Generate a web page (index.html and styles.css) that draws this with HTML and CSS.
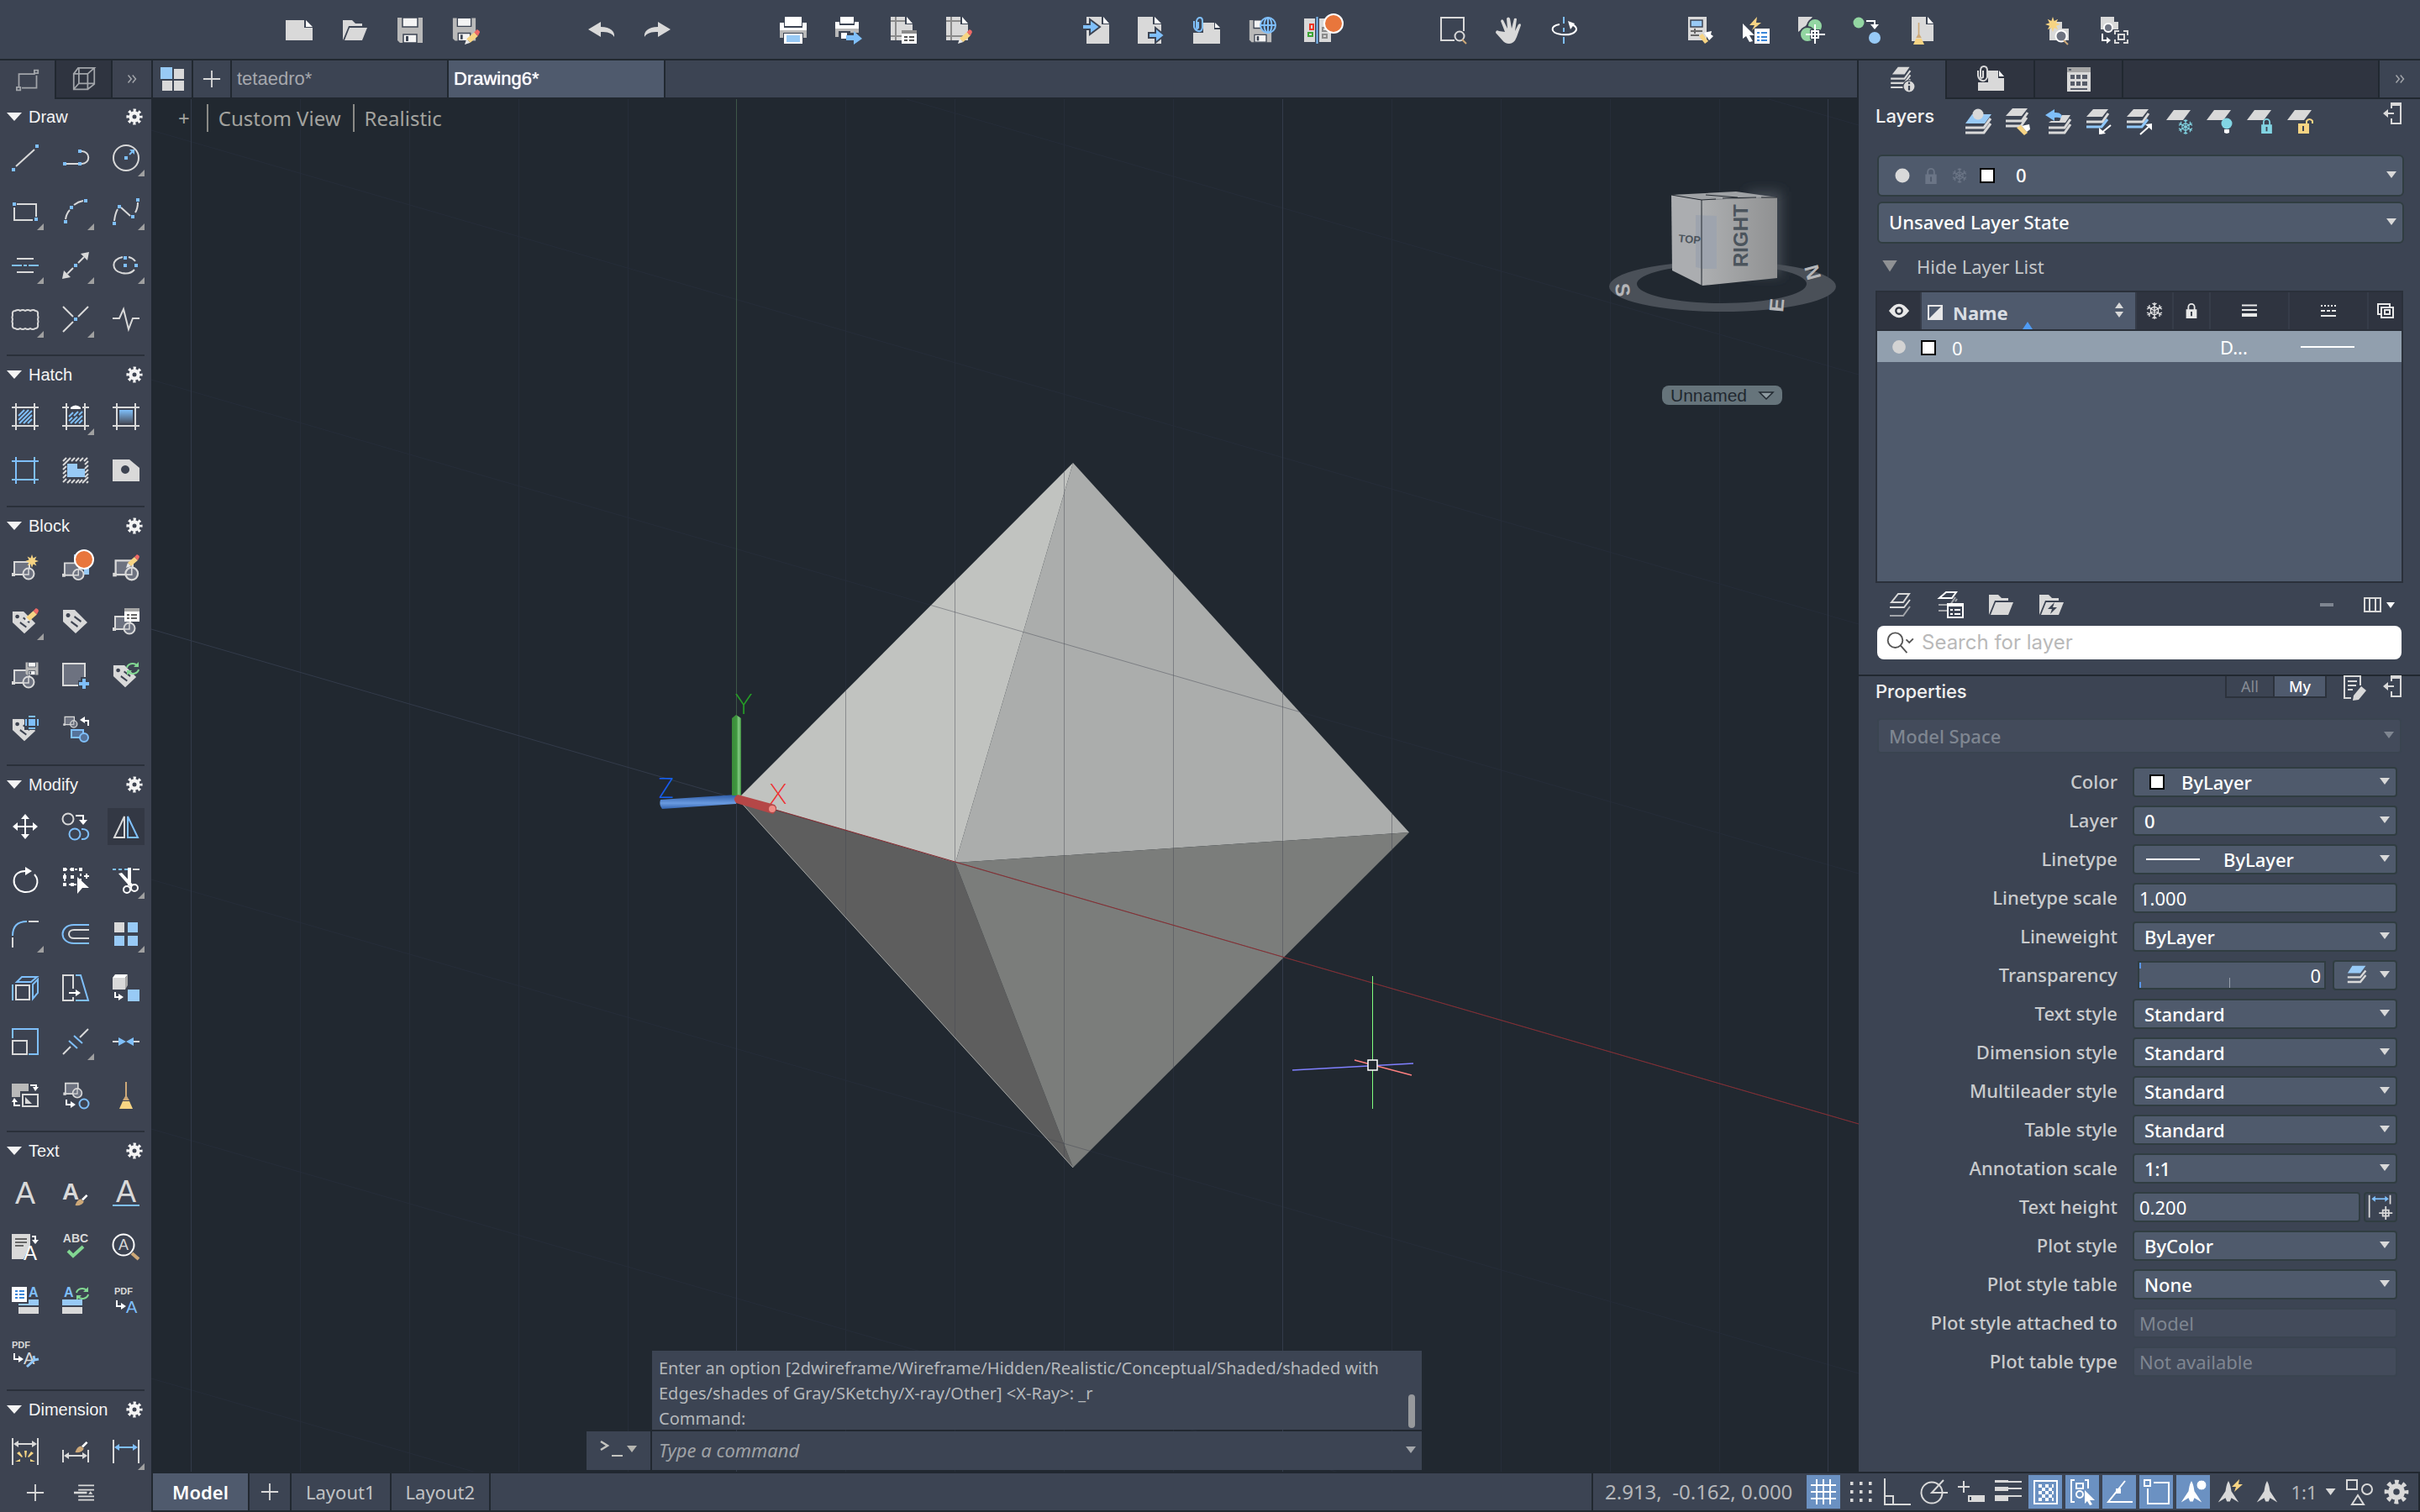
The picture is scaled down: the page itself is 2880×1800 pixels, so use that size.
FILE: index.html
```
<!DOCTYPE html>
<html lang="en">
<head>
  <meta charset="UTF-8">
  <title>Drawing6</title>
  <link rel="stylesheet" href="styles.css">
</head>
<body>

<!-- Shared icon parts -->
<svg class="sprite" aria-hidden="true">
  <symbol id="gear" viewBox="0 0 24 24"><circle cx="12" cy="12" r="9" fill="none" stroke="currentColor" stroke-width="5" stroke-dasharray="3.6 3.468" stroke-dashoffset="1.8"/><circle cx="12" cy="12" r="5.5" fill="none" stroke="currentColor" stroke-width="5"/></symbol>
  <symbol id="snow" viewBox="0 0 20 20"><path d="M10 0v20M1.500 5l17 10M1.500 15l17-10M10 5l4.500 2.500v5L10 15l-4.500-2.500v-5zM7.500 1L10 3l2.500-2M7.500 19l2.500-2 2.500 2M1 8l3-1.500V3M19 12l-3 1.500V17M1 12l3 1.500V17M19 8l-3-1.500V3" fill="none" stroke="currentColor" stroke-width="1.300"/></symbol>
  <symbol id="lock" viewBox="0 0 16 22"><path d="M4 10V6a4 4 0 0 1 8 0v4" fill="none" stroke="currentColor" stroke-width="2"/><path d="M1 9h14v12H1zM7 12v6h2v-6z" fill="currentColor" fill-rule="evenodd"/></symbol>
  <symbol id="pencil" viewBox="0 0 16 16"><path d="M0 16l2-6 4 4z" fill="#e8e8e8"/><path d="M2 10l8-7 4 4-8 7z" fill="#f7d483"/><path d="M10 3l3-3q3 1 3 3l-2 4z" fill="#ee6a66"/></symbol>
  <symbol id="sun" viewBox="0 0 16 16"><path d="M8 0l1.500 4.500 4-2-2 4L16 8l-4.500 1.500 2 4-4-2L8 16l-1.500-4.500-4 2 2-4L0 8l4.500-1.500-2-4 4 2z" fill="#f7d483"/></symbol>
  <symbol id="blk" viewBox="0 0 28 24"><path d="M3 2h18v15H3z" fill="#6d7280" stroke="#d9d9d9" stroke-width="2"/><path d="M0 15h4v4H0z" fill="#d9d9d9"/><circle cx="20" cy="16" r="6.500" fill="#6d7280" stroke="#d9d9d9" stroke-width="2"/><path d="M20 10v7h-6" fill="none" stroke="#d9d9d9" stroke-width="1.500"/></symbol>
  <symbol id="tag" viewBox="0 0 32 32"><path d="M1 2h14l15 15-14 13L1 16zM7 6a2.500 2.500 0 1 0 .1 0zM15 9l-1 2 8 6 1-2zM11 15l-1 2 8 6 1-2z" fill="#d9d9d9" fill-rule="evenodd"/></symbol>
  <symbol id="sync" viewBox="0 0 16 16"><path d="M1 7a7 6 0 0 1 12-3M15 9a7 6 0 0 1-12 3" fill="none" stroke="#82d792" stroke-width="2"/><path d="M15 0v6H9zM1 16v-6h6z" fill="#82d792"/></symbol>
  <symbol id="floppy" viewBox="0 0 32 32"><path d="M1 1h30v30H4l-3-3z" fill="#b9b9b9"/><path d="M7 1h18v11H7zM8 21h16v10H8z" fill="#f4f4f4" stroke="#3c4453" stroke-width="1.500"/><path d="M11 23h3v6h-3z" fill="#3c4453"/></symbol>
  <symbol id="page" viewBox="0 0 32 32"><path d="M5 0h18v9h9v23H5z" fill="#d9d9d9"/><path d="M25 0l7 8h-7z" fill="#fff"/></symbol>
  <symbol id="layers" viewBox="0 0 32 32"><path d="M12 1h16l-7 10H4z" fill="#d9d9d9"/><path d="M2 17h19l8-11M2 23h19l8-11M2 29h19l8-11" fill="none" stroke="#d9d9d9" stroke-width="2.500"/></symbol>
  <symbol id="brush" viewBox="0 0 16 16"><path d="M8 7l6-6 2 2-6 6z" fill="#fff"/><path d="M0 15q2-7 7-8l4 3q-3 6-11 5z" fill="#cda878"/></symbol>
  <symbol id="dock" viewBox="0 0 24 28"><path d="M10 8V2h11v24H10v-6M4 14h9" fill="none" stroke="currentColor" stroke-width="2"/><path d="M0 14l6-5v10zM10 1h12v4H10z" fill="currentColor"/></symbol>
  <symbol id="folder" viewBox="0 0 32 32"><path d="M2 4h11l4 4h8v3H9L2 28z" fill="#d9d9d9"/><path d="M10 13h21l-6 15H4z" fill="#d9d9d9"/></symbol>
  <symbol id="person" viewBox="0 0 32 32"><path d="M16 0c3 5 3 9 4 14l10 15-10-6-2 5h-4l-2-5-10 6 10-15c1-5 1-9 4-14z" fill="currentColor"/></symbol>
  <symbol id="broom" viewBox="0 0 16 32"><path d="M7 0h2v17l3 5H4l3-5z" fill="#cda878"/><path d="M4 23h8l4 9H0z" fill="#f7d483"/></symbol>
</svg>

<!-- Main toolbar -->
<header class="toolbar">
  <div class="group">
    <button aria-label="New"><svg viewBox="0 0 32 32"><path class="f" d="M0 4h22v9h10v15H0z"/><path class="fw" d="M24 4l8 8h-8z"/></svg></button>
    <button aria-label="Open"><svg viewBox="0 0 32 32"><use href="#folder"/></svg></button>
    <button aria-label="Save"><svg viewBox="0 0 32 32"><use href="#floppy"/></svg></button>
    <button aria-label="Save As"><svg viewBox="0 0 32 32"><use href="#floppy" width="29" height="30"/><use href="#pencil" x="15" y="15" width="18" height="18"/></svg></button>
  </div>
  <div class="group">
    <button aria-label="Undo"><svg viewBox="0 0 32 32"><path class="f" d="M0 15L15 6v6c12 0 17 6 16 12-3-5-8-6-16-6v6z"/></svg></button>
    <button aria-label="Redo"><svg viewBox="0 0 32 32"><path class="f" d="M32 15L17 6v6C5 12 0 18 1 24c3-5 8-6 16-6v6z"/></svg></button>
  </div>
  <div class="group">
    <button aria-label="Plot"><svg viewBox="0 0 32 32"><path class="fw" d="M6 0h20v11H6zM0 7h5v6h22V7h5v9H0z"/><path d="M0 16h32v9h-4v-6H4v6H0z" fill="#b9b9b9"/><path class="fw" d="M5 20h22v12H5z"/><path class="fb" d="M8 22h16v8H8z"/></svg></button>
    <button aria-label="Batch Plot"><svg viewBox="0 0 32 32"><path class="fw" d="M6 0h16v8H6zM0 6h5v4h18V6h5v8H0z"/><path d="M0 14h28v5H18v-2H4v7H0z" fill="#b9b9b9"/><path class="fw" d="M7 19h7v7H7z"/><path class="fbd" d="M13 22h9v-5l10 9-10 7v-5h-9z"/></svg></button>
    <button aria-label="Page Setup"><svg viewBox="0 0 32 32"><path class="f" d="M0 0h17v9h9v19H0z"/><path class="fw" d="M19 0l7 8h-7z"/><path class="sg" d="M6 0v28M0 5h17M0 23h20"/><path class="fw" d="M13 16h18v16H13z"/><path d="M13 16h18v4H13z" fill="#8b8b8b"/><path d="M16 23h4v2h-4zM22 23h6v2h-6zM16 27h4v2h-4zM22 27h6v2h-6z" fill="#555"/></svg></button>
    <button aria-label="Edit Page"><svg viewBox="0 0 32 32"><path class="f" d="M0 0h17v9h9v19H0z"/><path class="fw" d="M19 0l7 8h-7z"/><path class="sg" d="M6 0v28M0 5h17M0 23h20"/><use href="#pencil" x="14" y="15" width="17" height="17"/></svg></button>
  </div>
  <div class="group">
    <button aria-label="Import"><svg viewBox="0 0 32 32"><use href="#page"/><path class="fbd edge" d="M0 9h9V3l12 9-12 9v-6H0z"/></svg></button>
    <button aria-label="Export"><svg viewBox="0 0 32 32"><path class="f" d="M0 0h18v9h10v23H0z"/><path class="fw" d="M20 0l8 8h-8z"/><path class="fbd edge" d="M13 19h8v-6l11 9-11 9v-6h-8z"/></svg></button>
    <button aria-label="Attach"><svg viewBox="0 0 32 32"><path class="f" d="M0 19h12V7h13v8h7v17H0z"/><path class="fw" d="M26 7l6 6h-6z"/><path d="M0 0h12v19H0z" fill="#3c4453"/><path class="sb" d="M6 6v7q-2 3-2-1V5q1-4 4-4t3 4v8q-1 5-5 4t-5-5V5"/></svg></button>
    <button aria-label="Save to Web"><svg viewBox="0 0 32 32"><use href="#floppy" y="2" width="28" height="30"/><circle cx="23" cy="10" r="9" fill="#3c4453" stroke="#7fbffa" stroke-width="2"/><path class="sb" d="M14 10h18M23 1v18"/><ellipse class="sb" cx="23" cy="10" rx="4.500" ry="9"/></svg></button>
    <button class="badged" aria-label="Drawing Compare"><svg viewBox="0 0 32 32"><path class="f" d="M0 2h13v28H0zM18 2h14v28H18z"/><path class="sb" d="M15.500 0v32"/><path d="M7 9h4v6H7z" fill="none" stroke="#ee3524" stroke-width="2"/><path d="M5 19h5v4H5z" fill="none" stroke="#3ca535" stroke-width="2"/><path class="sg" d="M22 13h5v4h-5zM22 21h5v4h-5z"/></svg></button>
  </div>
  <div class="group">
    <button aria-label="Zoom Window"><svg viewBox="0 0 32 32"><path class="s" d="M28 17V1H1v27h16"/><circle class="s" cx="23" cy="23" r="5.500"/><path d="M26 27l5 5" stroke="#cda878" stroke-width="2"/></svg></button>
    <button aria-label="Pan"><svg viewBox="0 0 32 32"><path class="f" d="M11 18L6 5q1-3 3-1l5 10-1-12q2-3 4 0l2 12 3-12q3-1 3 1l-2 14 4-8q3-2 3 1l-5 14q-3 8-9 8-5 0-8-4l-8-9q0-4 4-2z"/></svg></button>
    <button aria-label="Orbit"><svg viewBox="0 0 32 32"><path class="sb" d="M15 0v8M15 13v5M15 24v8"/><path class="sw" d="M10 9C-1 11-2 19 12 21c17 2 24-8 12-12"/><path class="fw" d="M20 5l8 3-5 7z"/></svg></button>
  </div>
  <div class="group">
    <button aria-label="Match Properties"><svg viewBox="0 0 32 32"><path class="f" d="M1 0h22v28H1z"/><path class="fb" d="M4 4h14v8H4z" stroke="#3c4453" stroke-width="1.500"/><path class="sk" d="M4 17h14M4 22h10M9 14v6"/><path class="fy" d="M14 23l4-3 7 9-4 3z"/><path class="fw" d="M20 19l4-1 5-1-1 4 3 2-5 5z"/></svg></button>
    <button aria-label="Quick Select"><svg viewBox="0 0 32 32"><path class="fw" d="M0 8l14 14H8l4 7-4 1-4-7-4 3z"/><path class="fy" d="M17 0l-9 10h6l-3 6 11-9h-6z"/><path class="fw" d="M14 14h18v18H14z"/><path class="sbk" d="M17 19h3M22 19h7M17 24h3M22 24h7M17 28h3M22 28h7"/></svg></button>
    <button aria-label="Isolate"><svg viewBox="0 0 32 32"><path class="f" d="M0 0h17L8 12 0 18z"/><circle class="fg edge" cx="20" cy="11" r="9"/><circle class="fg edge" cx="11" cy="21" r="9"/><path d="M14 15h12v12H14z" fill="#3c4453"/><path class="sw" d="M20 9v23M9 21h23M16 17h8v8h-8z"/></svg></button>
    <button aria-label="Object Copy"><svg viewBox="0 0 32 32"><circle class="fg" cx="6" cy="7" r="6.500"/><circle class="fb" cx="25" cy="25" r="7"/><path class="sw" d="M15 5h10v5"/><path class="fw" d="M20 9h10l-5 6z"/></svg></button>
    <button aria-label="Purge"><svg viewBox="0 0 32 32"><path class="f" d="M3 0h17v9h9v20H3z"/><path class="fw" d="M22 0l7 8h-7z"/><use href="#broom" x="5" y="7" width="13" height="26"/></svg></button>
  </div>
  <div class="group">
    <button aria-label="View New"><svg viewBox="0 0 32 32"><path class="f" d="M5 15l6-9h9v8h8v14H5z"/><use href="#sun" width="18" height="18"/><circle cx="19" cy="23" r="6.500" fill="#6d7280" stroke="#fff" stroke-width="2"/><path d="M22 28l5 5" stroke="#cda878" stroke-width="2"/></svg></button>
    <button aria-label="View Manager"><svg viewBox="0 0 32 32"><path class="f" d="M0 0h16v6h5v9H0z"/><circle cx="9" cy="13" r="5" fill="#6d7280" stroke="#fff" stroke-width="2"/><path class="sw" d="M2 20v8h6"/><path class="fw" d="M7 24l5 4-5 4z"/><path class="s" d="M17 21v-4h5M27 17h5v5M32 27v4h-5M22 31h-5v-4M21 21h7v6h-7z"/></svg></button>
  </div>
</header>

<div class="workspace">

  <!-- Tool palette -->
  <aside class="palette">
    <div class="palette-tabs">
      <button class="active" aria-label="Drafting"><svg viewBox="0 0 32 32"><path class="sgr" d="M4 26V8h22M28 10v17H8M1 26h5v4H1zM25 3h5v4h-5z"/></svg></button>
      <button aria-label="Modeling"><svg viewBox="0 0 32 32"><path class="sgr" d="M2 9h19v21H2zM2 9l6-8h22l-9 8M30 1v22l-9 7M9 2v20l-7 8M9 22h20"/></svg></button>
      <button aria-label="More palettes" class="more"><svg viewBox="0 0 16 16"><path class="sgr" d="M2 2l5 6-5 6M9 2l5 6-5 6"/></svg></button>
    </div>
    <div class="palette-body">
      <section>
        <h2>Draw <button aria-label="Draw settings"><svg viewBox="0 0 24 24"><use href="#gear"/></svg></button></h2>
        <div class="tools">
          <button aria-label="Line"><svg viewBox="0 0 32 32"><path class="s" d="M5 26L27 6"/><path class="fbd" d="M0 28h4v4H0zM28 0h4v4h-4z"/></svg></button>
          <button aria-label="Polyline"><svg viewBox="0 0 32 32"><path class="s" d="M5 23h14M23 23c11 0 11-15 0-15"/><path class="fbd" d="M1 21h4v4H1zM19 21h4v4h-4zM19 6h4v4h-4z"/></svg></button>
          <button class="fly" aria-label="Circle"><svg viewBox="0 0 32 32"><circle class="s" cx="16" cy="16" r="15"/><path class="sb" d="M20 12l4-4"/><path class="fbd" d="M14 14h4v4h-4zM26 6v6l-6-6z"/></svg></button>
          <button class="fly" aria-label="Rectangle"><svg viewBox="0 0 32 32"><path class="s" d="M6 7h23v15M3 11v15h22"/><path class="fbd" d="M1 5h4v4H1zM27 23h4v4h-4z"/></svg></button>
          <button class="fly" aria-label="Arc"><svg viewBox="0 0 32 32"><path class="s" d="M4 25q1-7 5-11M14 8q5-4 11-5"/><path class="fbd" d="M2 26h4v4H2zM9 9h4v4H9zM26 1h4v4h-4z"/></svg></button>
          <button class="fly" aria-label="Spline"><svg viewBox="0 0 32 32"><path class="s" d="M2 27q1-9 4-14M10 11l11 10M27 17q3-5 3-12"/><path class="fbd" d="M0 28h4v4H0zM6 8h4v4H6zM22 20h4v4h-4zM28 0h4v4h-4z"/></svg></button>
          <button class="fly" aria-label="Centerline"><svg viewBox="0 0 32 32"><path class="s" d="M6 8h20M6 24h20"/><path class="sb" d="M0 16h12M14 16h4M20 16h12"/></svg></button>
          <button class="fly" aria-label="Ray"><svg viewBox="0 0 32 32"><path class="s" d="M6 26l7-7M19 13l7-7"/><path class="f" d="M32 0l-2 10-8-8zM0 32l2-10 8 8z"/><path class="fbd" d="M14 14h4v4h-4z"/></svg></button>
          <button class="fly" aria-label="Ellipse"><svg viewBox="0 0 32 32"><path class="s" d="M12 6C-2 9-2 22 11 25q10 2 15-4M19 6q5 1 8 5"/><path class="fbd" d="M13 5h4v4h-4zM13 14h4v4h-4zM26 14h4v4h-4z"/></svg></button>
          <button class="fly" aria-label="Revision Cloud"><svg viewBox="0 0 32 32"><path class="s" d="M4 6q4-2 6 0 3-2 6 0 3-2 6 0 4-2 6 0 4 0 3 5 1 3 0 5 1 3 0 5 1 6-3 6-3 2-6 0-3 2-6 0-3 2-6 0-3 2-6 0-4 0-3-6-1-2 0-5-1-2 0-5-1-5 3-5z"/></svg></button>
          <button class="fly" aria-label="Point"><svg viewBox="0 0 32 32"><path class="s" d="M1 1l12 12M31 1L19 13M1 31l12-12"/><path class="fbd" d="M14 14h4v4h-4z"/></svg></button>
          <button aria-label="Breakline"><svg viewBox="0 0 32 32"><path class="s" d="M0 15h8l5-11 6 24 5-13h8"/></svg></button>
        </div>
      </section>
      <section>
        <h2>Hatch <button aria-label="Hatch settings"><svg viewBox="0 0 24 24"><use href="#gear"/></svg></button></h2>
        <div class="tools">
          <button aria-label="Hatch"><svg viewBox="0 0 32 32"><path class="s" d="M0 5h32M0 27h32M5 0v32M27 0v32"/><path class="sb" d="M8 15l7-7M8 20L20 8M9 24L24 9M14 24l10-10M19 24l5-5"/></svg></button>
          <button class="fly" aria-label="Hatch Edit"><svg viewBox="0 0 32 32"><path class="s" d="M0 5h8M24 5h8M0 27h32M5 0v32M27 0v32"/><path class="fw" d="M10 5q6-5 12 0v2H10z"/><path class="sb" d="M8 16l5-5M8 21l4-4M14 15l5-5M10 24l8-8M20 14l4-4M15 24l9-9M20 24l4-4"/></svg></button>
          <button aria-label="Gradient"><svg viewBox="0 0 32 32"><linearGradient id="fade" x2="0" y2="1"><stop stop-color="#7fbffa"/><stop offset="1" stop-color="#4a5160"/></linearGradient><path d="M8 8h16v16H8z" fill="url(#fade)"/><path class="s" d="M0 5h32M0 27h32M5 0v32M27 0v32"/></svg></button>
          <button aria-label="Boundary"><svg viewBox="0 0 32 32"><path class="sb" d="M0 5h32M0 27h32M5 0v32M27 0v32"/></svg></button>
          <button aria-label="Region"><svg viewBox="0 0 32 32"><path class="s" d="M1 5l4-4M1 10L10 1M11 5l4-4M16 5l4-4M21 5l4-4M26 5l4-4M27 9l4-4M27 14l4-4M27 19l4-4M27 24l4-4M24 31l7-7M29 31l2-2M1 15l4-4M1 20l4-4M1 25l4-4M1 30l4-4M6 31l4-4M11 31l4-4M16 31l4-4M20 31l4-4"/><path class="fb" d="M6 8h12v6h9v10H6z"/></svg></button>
          <button aria-label="Wipeout"><svg viewBox="0 0 32 32"><path class="f" fill-rule="evenodd" d="M0 3h20l12 10v16H0zM15 10a5 5 0 1 0 .1 0z"/></svg></button>
        </div>
      </section>
      <section>
        <h2>Block <button aria-label="Block settings"><svg viewBox="0 0 24 24"><use href="#gear"/></svg></button></h2>
        <div class="tools">
          <button aria-label="Create Block"><svg viewBox="0 0 32 32"><use href="#blk" y="7" width="28" height="24"/><use href="#sun" x="16" width="16" height="16"/></svg></button>
          <button class="badged" aria-label="Insert Block"><svg viewBox="0 0 32 32"><path class="fb" d="M14 0h18v24h-6V10H14z"/><use href="#blk" y="8" width="27" height="24"/></svg></button>
          <button aria-label="Edit Block"><svg viewBox="0 0 32 32"><use href="#blk" y="5" width="32" height="27"/><use href="#pencil" x="16" width="16" height="16"/></svg></button>
          <button class="fly" aria-label="Edit Attributes"><svg viewBox="0 0 32 32"><use href="#tag" y="2" width="30" height="30"/><use href="#pencil" x="15" width="17" height="17"/></svg></button>
          <button aria-label="Define Attributes"><svg viewBox="0 0 32 32"><use href="#tag"/></svg></button>
          <button aria-label="Block Attributes"><svg viewBox="0 0 32 32"><use href="#blk" y="8" width="28" height="24"/><path class="fw" d="M14 0h18v16H14z"/><path d="M14 0h18v4H14z" fill="#a5a5a5"/><path class="sk" d="M17 8h3M22 8h7M17 12h3M22 12h7"/></svg></button>
          <button aria-label="Write Block"><svg viewBox="0 0 32 32"><use href="#blk" y="8" width="28" height="24"/><use href="#floppy" x="16" width="16" height="16"/></svg></button>
          <button aria-label="Set Base Point"><svg viewBox="0 0 32 32"><path d="M1 2h26v26H1z" fill="#6d7280" stroke="#d9d9d9" stroke-width="2"/><path d="M26 18v14M19 26h13" stroke="#3c4350" stroke-width="8"/><path d="M26 20v12M20 26h12" stroke="#7fbffa" stroke-width="4"/></svg></button>
          <button aria-label="Sync Attributes"><svg viewBox="0 0 32 32"><use href="#tag" y="2" width="30" height="30"/><use href="#sync" x="16" width="16" height="16"/></svg></button>
          <button aria-label="Retain Display"><svg viewBox="0 0 32 32"><use href="#tag" y="2" width="30" height="30"/><path d="M15 0h17v17H15z" fill="#3c4350"/><path class="sb" d="M17 4v8M31 4v8M20 1h8M20 15h8"/><path class="fbd" d="M20 4h8v8h-8z"/></svg></button>
          <button aria-label="Replace Block"><svg viewBox="0 0 32 32"><use href="#blk" width="20" height="15"/><path class="sw" d="M31 12V6h-7"/><path class="fw" d="M21 5l6-4v8z"/><path d="M11 17h14v9H11z" fill="#56739a" stroke="#7fbffa" stroke-width="2"/><circle cx="26" cy="26" r="5" fill="#56739a" stroke="#7fbffa" stroke-width="2"/></svg></button>
        </div>
      </section>
      <section>
        <h2>Modify <button aria-label="Modify settings"><svg viewBox="0 0 24 24"><use href="#gear"/></svg></button></h2>
        <div class="tools">
          <button aria-label="Move"><svg viewBox="0 0 32 32"><path class="sw" d="M16 4v24M4 16h24"/><path class="fw" d="M16 1l5 6H11zM16 31l5-6H11zM1 16l6-5v10zM31 16l-6-5v10z"/></svg></button>
          <button aria-label="Copy"><svg viewBox="0 0 32 32"><circle class="s" cx="7" cy="7" r="6.500"/><circle class="sb" cx="15" cy="25" r="6.500"/><path class="sb" d="M23 19c11-1 11 13 0 12"/><path class="sw" d="M16 3h9v6"/><path class="fw" d="M20 8h10l-5 6z"/></svg></button>
          <button class="on" aria-label="Mirror"><svg viewBox="0 0 32 32"><path class="s" d="M14 4v25H2z"/><path class="sb" d="M18 4v25h12z"/></svg></button>
          <button aria-label="Rotate"><svg viewBox="0 0 32 32"><path class="sw" d="M18 5C-2 3-2 28 15 30c15 1 19-13 12-21"/><path class="fw" d="M16 0l8 5-8 5z"/></svg></button>
          <button aria-label="Stretch"><svg viewBox="0 0 32 32"><path d="M3 3h19v18H3z" fill="none" stroke="#fff" stroke-width="2" stroke-dasharray="3 3"/><path class="fw" d="M1 1h4v4H1zM10 1h4v4h-4zM20 1h4v4h-4zM1 10h4v4H1zM1 19h4v4H1zM10 19h4v4h-4zM10 10h4v4h-4zM18 12l14 13h-8l-6 7z"/><path class="sw" d="M29 8v6M26 11h6"/></svg></button>
          <button class="fly" aria-label="Trim"><svg viewBox="0 0 32 32"><path class="sb" d="M0 3h4M7 3h4M14 3h4"/><path class="s" d="M24 3h8"/><path class="fw" d="M18 1h4v17l-4 5zM7 8l4-1 13 14-3 3z"/><circle class="sw" cx="26" cy="25" r="4"/><circle class="sw" cx="17" cy="27" r="4"/></svg></button>
          <button class="fly" aria-label="Fillet"><svg viewBox="0 0 32 32"><path class="s" d="M20 1h12M1 20v12"/><path class="sb" d="M18 1Q1 1 1 18"/></svg></button>
          <button aria-label="Offset"><svg viewBox="0 0 32 32"><path class="sb" d="M32 5H14C-4 5-4 27 14 27h18"/><path class="s" d="M32 11H14c-8 0-8 10 0 10h18"/></svg></button>
          <button class="fly" aria-label="Array"><svg viewBox="0 0 32 32"><path class="f" d="M2 2h12v12H2z"/><path class="fb" d="M18 2h12v12H18zM2 18h12v12H2zM18 18h12v12H18z"/></svg></button>
          <button aria-label="Extrude"><svg viewBox="0 0 32 32"><path class="s" d="M5 13h16v17H5z"/><path class="sb" d="M1 12v19M6 9l6-6h18l-7 6zM25 12l6-6v16l-6 7z"/></svg></button>
          <button aria-label="Scale Face"><svg viewBox="0 0 32 32"><path class="s" d="M13 17V1H1v30h12v-4"/><path class="sb" d="M16 1h6l9 30H16"/><path class="sw" d="M8 22h10"/><path class="fw" d="M16 18l6 4-6 4z"/></svg></button>
          <button aria-label="Convert Solid"><svg viewBox="0 0 32 32"><path class="f" d="M0 4h15v14H0z"/><path class="fw" d="M3 0h15l-3 4H0z"/><path d="M15 4l3-4v13l-3 5z" fill="#aaa"/><path class="fb" d="M18 18h14v14H18z"/><path class="sw" d="M3 21v6h5"/><path class="fw" d="M7 23l6 4-6 4z"/></svg></button>
          <button aria-label="Scale"><svg viewBox="0 0 32 32"><path class="sb" d="M1 12V1h30v30H20"/><path class="s" d="M1 15h17v16H1z"/></svg></button>
          <button class="fly" aria-label="Break"><svg viewBox="0 0 32 32"><path class="s" d="M1 31l9-9M21 11L31 1"/><path class="sb" d="M8 15l10 9M14 9l10 9"/></svg></button>
          <button aria-label="Join"><svg viewBox="0 0 32 32"><path class="s" d="M0 16h8M24 16h8"/><path class="fbd" d="M7 11l9 5-9 5zM25 11l-9 5 9 5z"/></svg></button>
          <button aria-label="Change Space"><svg viewBox="0 0 32 32"><path d="M0 2h20v9H10v7H0z" fill="#b9b9b9"/><path class="s" d="M13 15h18v14H13z"/><path class="f" d="M16 18l8 8h-8z"/><path class="sw" d="M22 4h7v3M10 28H3v-4"/><path class="fw" d="M25 6h7l-4 5zM0 24l3-5 4 5z"/></svg></button>
          <button aria-label="Copy Nested"><svg viewBox="0 0 32 32"><use href="#blk" width="26" height="20"/><circle class="sb" cx="26" cy="26" r="5.500"/><path class="sw" d="M5 21v6h6"/><path class="fw" d="M10 23l6 4-6 4z"/></svg></button>
          <button aria-label="Clean Up"><svg viewBox="0 0 32 32"><use href="#broom" x="8" width="16" height="32"/></svg></button>
        </div>
      </section>
      <section>
        <h2>Text <button aria-label="Text settings"><svg viewBox="0 0 24 24"><use href="#gear"/></svg></button></h2>
        <div class="tools">
          <button aria-label="Multiline Text"><svg viewBox="0 0 32 32"><text class="f t36" x="16" y="29" text-anchor="middle">A</text></svg></button>
          <button aria-label="Text Style"><svg viewBox="0 0 32 32"><text class="f t28" x="0" y="24">A</text><use href="#brush" x="14" y="17" width="18" height="15"/></svg></button>
          <button aria-label="Single Line Text"><svg viewBox="0 0 32 32"><text class="f t36" x="16" y="27" text-anchor="middle">A</text><path class="sb" d="M0 31h32"/></svg></button>
          <button aria-label="Convert to Mtext"><svg viewBox="0 0 32 32"><path class="f" d="M0 1h22v14l-8 16H0z"/><path class="sk" d="M4 7h14M4 11h14M4 15h10"/><path d="M14 32l9-20h8v20z" fill="#3c4350"/><text class="fw t24" x="14" y="32">A</text><path class="sw" d="M24 4h4v5"/><path class="fw" d="M24 8h8l-4 5z"/></svg></button>
          <button aria-label="Spell Check"><svg viewBox="0 0 32 32"><text class="f t14" x="16" y="11" text-anchor="middle">ABC</text><path d="M7 21l6 6 12-11" fill="none" stroke="#82d792" stroke-width="4"/></svg></button>
          <button aria-label="Find Text"><svg viewBox="0 0 32 32"><circle class="sw" cx="13" cy="14" r="12.500"/><text class="f t18" x="13" y="20" text-anchor="middle">A</text><path d="M23 24l8 7" stroke="#cda878" stroke-width="4"/></svg></button>
          <button aria-label="Field"><svg viewBox="0 0 32 32"><path class="fw" d="M0 0h18v18H0z"/><path class="sbk" d="M4 5h3M9 5h6M4 9h3M9 9h6M4 13h3M9 13h6"/><text class="fbd t16" x="20" y="12">A</text><path class="fb" d="M20 15h12v7H8v-2h12z"/><path class="f" d="M8 24h24v8H8z"/></svg></button>
          <button aria-label="Update Field"><svg viewBox="0 0 32 32"><text class="fbd t16" x="2" y="12">A</text><use href="#sync" x="16" width="16" height="16"/><path class="fb" d="M0 15h24v7H0z"/><path class="f" d="M0 24h24v8H0z"/></svg></button>
          <button aria-label="PDF to Text"><svg viewBox="0 0 32 32"><text class="f t11" x="2" y="9">PDF</text><path class="sw" d="M5 16v7h6"/><path class="fw" d="M10 19l6 4-6 4z"/><text class="fbd t20" x="16" y="31">A</text></svg></button>
          <button aria-label="PDF Text Settings"><svg viewBox="0 0 32 32"><text class="f t11" x="0" y="9">PDF</text><path class="sw" d="M3 15v7h6"/><path class="fw" d="M8 18l6 4-6 4z"/><text class="f t20" x="14" y="28">A</text><path class="sb3" d="M18 31l10-9M26 18l1 5 5-1"/></svg></button>
        </div>
      </section>
      <section>
        <h2>Dimension <button aria-label="Dimension settings"><svg viewBox="0 0 24 24"><use href="#gear"/></svg></button></h2>
        <div class="tools">
          <button aria-label="Quick Dimension"><svg viewBox="0 0 32 32"><path class="s" d="M1 0v32M31 0v32M5 7h22"/><path class="f" d="M2 7l6-4v8zM30 7l-6-4v8z"/><path class="fy" d="M15 15h3l-1 8h-1zM6 18l3-2 4 6-1 1zM26 18l-3-2-4 6 1 1zM4 28l6-3v3zM28 28l-6-3v3z"/></svg></button>
          <button aria-label="Dimension Style"><svg viewBox="0 0 32 32"><path class="s" d="M1 14v15M31 14v15M5 21h22"/><path class="f" d="M2 21l6-4v8zM30 21l-6-4v8z"/><use href="#brush" x="14" y="3" width="18" height="15"/></svg></button>
          <button class="fly" aria-label="Linear Dimension"><svg viewBox="0 0 32 32"><path class="s" d="M1 2v28M31 2v28"/><path class="sb" d="M5 11h22"/><path class="fbd" d="M2 11l6-4v8zM30 11l-6-4v8z"/></svg></button>
        </div>
      </section>
    </div>
    <div class="palette-foot">
      <button aria-label="Add"><svg viewBox="0 0 24 24"><path class="s" d="M12 1v22M1 12h22"/></svg></button>
      <button aria-label="Arrange"><svg viewBox="0 0 28 24"><path class="s" d="M6 2h22M6 8h22M6 17h22M6 22h22"/><path d="M0 12h18" stroke="#d9d9d9" stroke-width="3"/><path class="f" d="M20 14l3-4 3 4z"/></svg></button>
    </div>
  </aside>

  <div class="main">
    <div class="upper">
      <main class="document">
        <nav class="doc-tabs">
          <button class="square" aria-label="Start"><svg viewBox="0 0 32 32"><path class="fb" d="M2 2h14v14H2z"/><path class="f" d="M18 4h12v12H18zM4 18h12v12H4zM18 18h12v12H18z"/></svg></button>
          <button class="square" aria-label="New drawing"><svg viewBox="0 0 24 24"><path class="s" d="M12 1v22M1 12h22"/></svg></button>
          <button class="doc">tetaedro*</button>
          <button class="doc current">Drawing6*</button>
          <div class="rest"></div>
        </nav>

        <div class="canvas">
          <svg class="scene" viewBox="180 118 2032 1634" preserveAspectRatio="xMidYMid slice">
            <defs>
              <path id="minor" d="M357.500 118v1634M487.500 118v1634M617.500 118v1634M747.500 118v1634M1006.500 118v1634M1136.500 118v1634M1266.500 118v1634M1396.500 118v1634M1656.500 118v1634M1786.500 118v1634M1916.500 118v1634M2046.500 118v1634M180-440L2212 149M180-142L2212 446M180 155L2212 743M180 452L2212 1040M180 1047L2212 1635M180 1344L2212 1932M180 1641L2212 2229"/>
              <path id="major" d="M227.500 118v1634M876.500 118v1634M1526.500 118v1634M2175.500 118v1634M180 749L2212 1338"/>
              <clipPath id="solid"><path d="M1277 551L1677 991 1277 1390 878 951z"/></clipPath>
              <linearGradient id="rodY"><stop stop-color="#3a8a3a"/><stop offset=".5" stop-color="#3f973f"/><stop offset=".75" stop-color="#85cd85"/><stop offset="1" stop-color="#3c8a3c"/></linearGradient>
              <linearGradient id="rodZ" x2="0" y2="1"><stop stop-color="#2c5aa6"/><stop offset=".6" stop-color="#6a9be0"/><stop offset="1" stop-color="#3263b0"/></linearGradient>
            </defs>
            <use href="#minor" class="grid-minor"/>
            <use href="#major" class="grid-major"/>
            <path class="axis-y" d="M876.500 118v734"/>
            <path d="M1277 551L878 951l259 76z" fill="#c1c3c0"/>
            <path d="M1277 551l-140 476 540-36z" fill="#abadac"/>
            <path d="M878 951l259 76 140 363z" fill="#5e5e5e"/>
            <path d="M1137 1027l540-36-400 399z" fill="#7b7d7b"/>
            <g clip-path="url(#solid)" class="grid-solid"><use href="#minor"/><use href="#major"/></g>
            <path d="M878 951l399 439" stroke="#a5a7a5" fill="none"/>
            <path class="axis-x" d="M878 951L2212 1338"/>
            <path d="M786 952l90-6v11l-88 6q-4-5-2-11z" fill="url(#rodZ)"/>
            <path d="M871 855l5-4 6 4v92h-11z" fill="url(#rodY)"/>
            <path d="M878 946l44 12q5 5-2 11l-44-13q-5-6 2-10z" fill="#b54747"/><circle cx="919" cy="963" r="4" fill="#ee8d86"/>
            <text class="axis-label" x="926" y="957" fill="#ee3030">X</text>
            <text class="axis-label" x="885" y="850" fill="#25a125">Y</text>
            <text class="axis-label" x="793" y="950" fill="#1560f0">Z</text>
            <path d="M1538 1274l144-8" stroke="#8080ff" stroke-width="1.500"/>
            <path d="M1612 1262l68 18" stroke="#ff8080" stroke-width="1.500"/>
            <path d="M1633.500 1162v158" stroke="#80ff80"/>
            <path d="M1628 1262h11v12h-11z" fill="#212830" stroke="#fff" stroke-width="1.500"/>
          </svg>

          <div class="view-label"><button>+</button><button>Custom View</button><button>Realistic</button></div>

          <svg class="cube" viewBox="1900 200 300 190">
            <defs>
              <linearGradient id="face"><stop stop-color="#adafb1"/><stop offset="1" stop-color="#909192"/></linearGradient>
              <filter id="glow" x="-30%" y="-30%" width="160%" height="160%"><feGaussianBlur stdDeviation="7"/></filter>
            </defs>
            <path d="M2080 228h40v100h-40z" fill="#444b54" filter="url(#glow)"/>
            <path fill="#4a5058" fill-rule="evenodd" d="M1915 341a135 30 0 1 0 270 0a135 30 0 1 0 -270 0zM1948 338a101 23 0 1 1 202 0a101 23 0 1 1 -202 0z"/>
            <path d="M1989 232l77-4 49 7-90 3z" fill="#9fa2a5"/>
            <path d="M1989 232l36 6 1 102-36-18z" fill="#abadb0"/>
            <path d="M2025 238l90-3v96l-89 9z" fill="url(#face)"/>
            <path d="M2018 256l25 1v63h-17l-8-2z" fill="#9ea4ae"/>
            <path d="M1989 232l36 6v102M2025 238l17-1M2050 236l40-1M2096 235l19 0M2030 232l38 3" fill="none" stroke="#22282f"/>
            <text class="cube-face" transform="translate(2080 318) rotate(-90)">RIGHT</text>
            <text class="cube-side" transform="translate(1997 288) rotate(6)">TOP</text>
            <text class="compass" transform="translate(1922 338) rotate(84)">S</text>
            <text class="compass" transform="translate(2122 372) rotate(-85)">E</text>
            <text class="compass" transform="translate(2147 318) rotate(75)">N</text>
          </svg>
          <button class="ucs">Unnamed <svg viewBox="0 0 18 12"><path d="M1 2h16l-8 8z" fill="#8e9ba1" stroke="#212830" stroke-width="1.500"/></svg></button>

          <!-- Command line -->
          <div class="command">
            <div class="history">
              <p>Enter an option [2dwireframe/Wireframe/Hidden/Realistic/Conceptual/Shaded/shaded with<br>Edges/shades of Gray/SKetchy/X-ray/Other] &lt;X-Ray&gt;: _r<br>Command:</p>
              <i class="thumb"></i>
            </div>
            <button class="prompt" aria-label="Recent commands"><svg viewBox="0 0 46 24"><path d="M2 1l8 5-8 5" fill="none" stroke="#c5c5c0" stroke-width="2.500"/><path d="M15 18h13" stroke="#c5c5c0" stroke-width="2"/><path d="M33 6h12l-6 8z" fill="#b5b5b0"/></svg></button>
            <label class="entry caret"><input type="text" placeholder="Type a command" aria-label="Command"></label>
          </div>
        </div>
      </main>

      <!-- Inspector -->
      <aside class="inspector">
        <div class="panel-tabs">
          <button class="active" aria-label="Layers and properties"><svg viewBox="0 0 36 36"><use href="#layers" width="32" height="31"/><circle cx="27" cy="27" r="8" fill="#d9d9d9" stroke="#3c4453" stroke-width="1.500"/><path d="M27 21v3M27 26v6" stroke="#3c4453" stroke-width="2.500"/></svg></button>
          <button aria-label="References"><svg viewBox="0 0 32 32"><path class="f" d="M1 20h12V6h12v9h7v15H1z"/><path class="fw" d="M26 6l6 7h-6z"/><path d="M0 0h13v20H0z" fill="#2f3440"/><path class="s" d="M7 6v8q-3 2-3-1V6q0-5 4-5t4 5v8q-2 5-6 4t-5-6V6"/></svg></button>
          <button aria-label="Tool palettes"><svg viewBox="0 0 32 32"><path class="f" d="M2 2h28v29H2z"/><path d="M2 2h28v6H2z" fill="#a5a5a5"/><path d="M6 11h5v5H6zM13 11h5v5h-5zM20 11h6v5h-6zM6 19h5v5H6zM13 19h5v5h-5zM20 19h6v5h-6zM6 27h20v2H6zM4 4h3v2H4z" fill="#555b68"/></svg></button>
          <div class="rest"></div>
          <button class="more" aria-label="More panels"><svg viewBox="0 0 16 16"><path class="sgr" d="M2 2l5 6-5 6M9 2l5 6-5 6"/></svg></button>
        </div>

        <section class="layers">
          <div class="panel-head">
            <h2>Layers</h2>
            <button aria-label="Make Current"><svg viewBox="0 0 32 32"><path class="fb" d="M9 7h23l-8 11H1z"/><circle class="f" cx="16" cy="7" r="6.500"/><path class="sl" d="M1 23h22l8-11M1 29h22l8-11"/></svg></button>
            <button aria-label="Match Layer"><svg viewBox="0 0 32 32"><path class="f" d="M9 0h18l-7 9H1z"/><path class="sl" d="M1 15h19l7-10M1 21h18l7-10"/><path class="fy" d="M14 23l5-3 8 9-4 3z"/><path class="fw" d="M20 21l4-1 5-1 1 6-4 3z"/></svg></button>
            <button aria-label="Layer Previous"><svg viewBox="0 0 32 32"><path class="fbd" d="M0 8l11-7v4q10-1 10 9-3-4-10-3v4z"/><path class="f" d="M20 8h10l-6 9H4l3-2h10z"/><path class="sl" d="M4 23h19l7-10M4 29h19l7-10"/></svg></button>
            <button aria-label="Isolate Layer"><svg viewBox="0 0 32 32"><path class="f" d="M9 1h18l-7 9H1z"/><path class="sl" d="M1 16h19l7-10"/><path class="sb3" d="M1 22h18l7-9"/><path class="sw" d="M30 20L18 30"/><path class="fw" d="M16 31v-8l8 7z"/></svg></button>
            <button aria-label="Unisolate Layer"><svg viewBox="0 0 32 32"><path class="f" d="M9 1h18l-7 9H1z"/><path class="sl" d="M1 16h19l7-10"/><path class="sb3" d="M1 22h18l7-9"/><path class="sw" d="M17 31l10-9"/><path class="fw" d="M31 18v8l-8-7z"/></svg></button>
            <button aria-label="Freeze Layer"><svg viewBox="0 0 32 32"><path class="f" d="M9 2h20l-9 12H0z"/><g class="cy"><use href="#snow" x="14" y="13" width="18" height="18"/></g></svg></button>
            <button aria-label="Layer Off"><svg viewBox="0 0 32 32"><path class="f" d="M9 2h20l-9 12H0z"/><circle cx="24" cy="18" r="6.500" fill="#82d5e3"/><path class="fw" d="M21 25h6v4l-3 1-3-1z"/></svg></button>
            <button aria-label="Lock Layer"><svg viewBox="0 0 32 32"><path class="f" d="M9 2h20l-9 12H0z"/><g class="cy"><use href="#lock" x="16" y="11" width="15" height="20"/></g></svg></button>
            <button aria-label="Unlock Layer"><svg viewBox="0 0 32 32"><path class="f" d="M9 2h20l-9 12H0z"/><path d="M23 18v-3a4 4 0 0 1 7 0v3" fill="none" stroke="#f7d483" stroke-width="2"/><path class="fy" fill-rule="evenodd" d="M13 18h13v12H13zM18 21v6h2v-6z"/></svg></button>
            <button class="dock" aria-label="Dock layers"><svg viewBox="0 0 24 28"><use href="#dock"/></svg></button>
          </div>

          <div class="field caret layer-select">
            <svg class="layer-state" viewBox="0 0 130 24"><circle cx="10" cy="12" r="8.500" fill="#d9d9d9"/><g color="#6b7586"><use href="#lock" x="36" y="2" width="16" height="21"/><use href="#snow" x="69" y="3" width="18" height="18"/></g></svg>
            <i class="swatch"></i>
            <select aria-label="Current layer"><option>0</option></select>
          </div>
          <div class="field caret state-select"><select aria-label="Layer state"><option>Unsaved Layer State</option></select></div>

          <button class="toggle">Hide Layer List</button>

          <div class="layer-list">
            <table>
              <colgroup><col class="c-eye"><col class="c-name"><col class="c-small"><col class="c-small"><col class="c-line"><col class="c-line"><col></colgroup>
              <thead>
                <tr>
                  <th aria-label="Visible"><svg viewBox="0 0 28 20"><path d="M1 10q13-18 26 0-13 18-26 0z" fill="#e8e8e8"/><circle cx="14" cy="10" r="4" fill="#e8e8e8" stroke="#2f3440" stroke-width="2.500"/></svg></th>
                  <th class="name"><svg viewBox="0 0 18 18"><path d="M1 1h16v16H1z" fill="none" stroke="#e8e8e8" stroke-width="2"/><path d="M17 1v16H1z" fill="#e8e8e8"/></svg><span>Name</span><svg class="sort" viewBox="0 0 12 18"><path class="f" d="M6 0l5 7H1zM6 18l5-7H1z"/></svg></th>
                  <th aria-label="Freeze"><svg viewBox="0 0 20 20"><use href="#snow"/></svg></th>
                  <th aria-label="Lock"><svg viewBox="0 0 20 22"><use href="#lock" x="2" width="16" height="22"/></svg></th>
                  <th aria-label="Lineweight"><svg viewBox="0 0 20 16"><path d="M1 1.500h18M1 7h18" stroke="#e8e8e8" stroke-width="2"/><path d="M1 13h18" stroke="#e8e8e8" stroke-width="4"/></svg></th>
                  <th aria-label="Linetype"><svg viewBox="0 0 20 16"><path d="M1 2h18" stroke="#e8e8e8" stroke-width="2" stroke-dasharray="2 2"/><path d="M1 8h5M8 8h4M14 8h5M1 14h18" stroke="#e8e8e8" stroke-width="2"/></svg></th>
                  <th aria-label="Viewport"><svg viewBox="0 0 20 18"><path d="M15 5V1H1v12h4M5 5h14v12H5zM9 8h6v5H9z" fill="none" stroke="#e8e8e8" stroke-width="2"/></svg></th>
                </tr>
              </thead>
              <tbody>
                <tr>
                  <td><svg viewBox="0 0 28 20"><circle cx="14" cy="10" r="8.500" fill="#d3d3d3"/></svg></td>
                  <td class="name"><i class="swatch"></i><span>0</span></td>
                  <td></td><td></td>
                  <td class="weight">D...</td>
                  <td><i class="rule"></i></td>
                  <td></td>
                </tr>
              </tbody>
            </table>
          </div>

          <div class="list-actions">
            <button aria-label="New Layer"><svg viewBox="0 0 32 32"><path class="s" d="M14 3h13l-7 10H6zM4 19h17l7-9"/><path class="sgr" d="M4 29h16l8-11"/></svg></button>
            <button aria-label="Layer States"><svg viewBox="0 0 32 32"><path class="sw" d="M11 1h12l-5 7H3z"/><path class="sgr" d="M2 16h14l6-9M2 23h12M22 12l2-3"/><path d="M13 15h18v16H13z" fill="#3c4453" stroke="#fff" stroke-width="2"/><path class="sw" d="M13 17h18M16 22h3M21 22h7M16 27h3M21 27h7"/></svg></button>
            <button aria-label="New Group"><svg viewBox="0 0 32 32"><use href="#folder"/></svg></button>
            <button aria-label="New Filter"><svg viewBox="0 0 32 32"><use href="#folder"/><path d="M20 13l-8 8h5l-2 6 8-8h-5z" fill="#3c4453"/></svg></button>
            <button class="remove" aria-label="Delete Layer"><svg viewBox="0 0 32 32"><path d="M8 16h16" stroke="#7f8691" stroke-width="4"/></svg></button>
            <button class="columns" aria-label="Columns"><svg viewBox="0 0 38 20"><path class="s" d="M1 2h19v16H1zM7 2v16M14 2v16"/><path class="fw" d="M27 7h10l-5 7z"/></svg></button>
          </div>

          <label class="search">
            <svg viewBox="0 0 36 28"><circle cx="11" cy="11" r="9.500"/><path d="M18 18l8 9M25 10l4 4 5-5"/></svg>
            <input type="search" placeholder="Search for layer" aria-label="Search for layer">
          </label>
        </section>

        <section class="properties">
          <div class="panel-head">
            <h2>Properties</h2>
            <div class="switch"><button>All</button><button class="on">My</button></div>
            <button aria-label="Customize"><svg viewBox="0 0 32 32"><path class="s" d="M12 28H4V2h19v11M8 8h11M8 13h10M8 18h6"/><path class="f" d="M15 25l9-11 6 5-9 11-7 1z"/></svg></button>
            <button class="dock" aria-label="Dock properties"><svg viewBox="0 0 24 28"><use href="#dock"/></svg></button>
          </div>
          <div class="field caret space disabled"><select aria-label="Object type" disabled><option>Model Space</option></select></div>

          <div class="rows">
            <label for="color">Color</label>
            <div class="field caret with-swatch"><i class="swatch"></i><select id="color"><option>ByLayer</option></select></div>
            <label for="layer">Layer</label>
            <div class="field caret"><select id="layer"><option>0</option></select></div>
            <label for="ltype">Linetype</label>
            <div class="field caret with-rule"><i class="rule"></i><select id="ltype"><option>ByLayer</option></select></div>
            <label for="lscale">Linetype scale</label>
            <div class="field"><input id="lscale" type="text" value="1.000"></div>
            <label for="lweight">Lineweight</label>
            <div class="field caret"><select id="lweight"><option>ByLayer</option></select></div>
            <label for="transp">Transparency</label>
            <div class="pair">
              <div class="field meter"><input id="transp" type="text" value="0"></div>
              <button class="field caret source" aria-label="Transparency source"><svg viewBox="0 0 32 30"><path class="fb" d="M9 1h20l-8 11H2z"/><path class="sl" d="M2 18h19l8-10M2 25h19l8-10"/></svg></button>
            </div>
            <label for="tstyle">Text style</label>
            <div class="field caret"><select id="tstyle"><option>Standard</option></select></div>
            <label for="dstyle">Dimension style</label>
            <div class="field caret"><select id="dstyle"><option>Standard</option></select></div>
            <label for="mstyle">Multileader style</label>
            <div class="field caret"><select id="mstyle"><option>Standard</option></select></div>
            <label for="tbstyle">Table style</label>
            <div class="field caret"><select id="tbstyle"><option>Standard</option></select></div>
            <label for="ascale">Annotation scale</label>
            <div class="field caret"><select id="ascale"><option>1:1</option></select></div>
            <label for="theight">Text height</label>
            <div class="pair tight">
              <div class="field"><input id="theight" type="text" value="0.200"></div>
              <button class="field pick" aria-label="Pick height"><svg viewBox="0 0 36 36"><path class="s" d="M3 2v30M31 2v12"/><path class="sb" d="M8 7h19"/><path class="fbd" d="M6 7l5-4v8zM29 7l-5-4v8z"/><path class="s" d="M25 17v18M16 26h18M21 22h8v8h-8z"/></svg></button>
            </div>
            <label for="pstyle">Plot style</label>
            <div class="field caret"><select id="pstyle"><option>ByColor</option></select></div>
            <label for="ptable">Plot style table</label>
            <div class="field caret"><select id="ptable"><option>None</option></select></div>
            <label for="pattach">Plot style attached to</label>
            <div class="field disabled"><input id="pattach" type="text" value="Model" disabled></div>
            <label for="ptype">Plot table type</label>
            <div class="field disabled"><input id="ptype" type="text" value="Not available" disabled></div>
          </div>
        </section>
      </aside>
    </div>

    <!-- Layout tabs and status bar -->
    <footer class="status">
      <button class="layout current">Model</button>
      <button class="add" aria-label="New layout"><svg viewBox="0 0 24 24"><path class="s" d="M12 1v22M1 12h22"/></svg></button>
      <button class="layout">Layout1</button>
      <button class="layout">Layout2</button>
      <div class="rest"></div>
      <div class="tray">
        <output>2.913,&nbsp; -0.162, 0.000</output>
        <button class="on" aria-label="Grid"><svg viewBox="0 0 32 32"><path class="sw" d="M8 1v30M16 1v30M24 1v30M1 8h30M1 16h30M1 24h30"/></svg></button>
        <button aria-label="Snap"><svg viewBox="0 0 32 32"><path d="M4 6h26M4 16h26M4 26h26" stroke="#d9d9d9" stroke-width="4" stroke-dasharray="3.500 7.500"/></svg></button>
        <button aria-label="Ortho"><svg viewBox="0 0 32 32"><path class="s" d="M1 0v31h31M1 21h10v10"/></svg></button>
        <button aria-label="Polar"><svg viewBox="0 0 32 32"><circle class="s" cx="13" cy="17" r="12.500"/><path class="s" d="M27 2L13 17h19"/></svg></button>
        <button aria-label="Dynamic Input"><svg viewBox="0 0 32 32"><path class="s" d="M7 3v14M0 10h14"/><path class="f" d="M12 20h20v8H12z"/><path d="M15 22v4" stroke="#3c4453" stroke-width="2"/></svg></button>
        <button aria-label="Lineweight display"><svg viewBox="0 0 32 32"><path class="f" d="M0 2h16v3H0zM0 10h16v5H0zM0 20h16v7H0zM16 3h16v2H16zM16 11h16v2H16zM16 20h16v2H16z"/></svg></button>
        <button class="on" aria-label="Transparency display"><svg viewBox="0 0 32 32"><path class="sw" d="M3 3h27v27H3z"/><path d="M8 9h18M8 17h18M8 25h18" stroke="#fff" stroke-width="4" stroke-dasharray="4 4"/><path d="M12 13h14M12 21h14" stroke="#fff" stroke-width="4" stroke-dasharray="4 4"/></svg></button>
        <button class="on" aria-label="Selection cycling"><svg viewBox="0 0 32 32"><path class="sw" d="M7 2H3v26h4M19 2h4v10M9 6h8v6H9z"/><circle class="sw" cx="13" cy="19" r="4"/><path class="fw" d="M19 14l12 12h-6l3 5-3 1-3-5-3 3z"/></svg></button>
        <button class="on" aria-label="Object snap tracking"><svg viewBox="0 0 32 32"><path class="sw" d="M23 3L3 28h29"/><path class="fw" d="M12 12h6v6h-6z"/></svg></button>
        <button class="on" aria-label="Object snap"><svg viewBox="0 0 32 32"><path class="sw" d="M13 5h18v25H6V12M2 2h7v7H2z"/></svg></button>
        <button class="on" aria-label="Annotation visibility"><svg viewBox="0 0 32 32"><g color="#fff"><use href="#person" y="2" width="28" height="30"/></g><circle class="fw" cx="26" cy="8" r="6" stroke="#6b91c2"/></svg></button>
        <button aria-label="Auto scale"><svg viewBox="0 0 32 32"><g color="#d9d9d9"><use href="#person" y="2" width="28" height="30"/></g><path class="fy" d="M27 1l-9 9h5l-2 6 10-9h-5z"/></svg></button>
        <button aria-label="Annotation scale list"><svg viewBox="0 0 32 32"><g color="#d9d9d9"><use href="#person" x="2" y="2" width="28" height="30"/></g></svg></button>
        <button class="scale">1:1<i></i></button>
        <button aria-label="Isolate objects"><svg viewBox="0 0 32 32"><path class="s" d="M1 2h12v11H1zM14 20l7 11H7z"/><circle class="s" cx="25" cy="13" r="6"/></svg></button>
        <button aria-label="Settings"><svg class="cog" viewBox="0 0 24 24"><use href="#gear"/></svg></button>
      </div>
    </footer>
  </div>
</div>

</body>
</html>
```
FILE: styles.css
```
* {
  margin: 0;
  padding: 0;
  box-sizing: border-box;
}

body {
  height: 100vh;
  display: flex;
  flex-direction: column;
  overflow: hidden;
  background: #212830;
  color: #d9d9d9;
  font-family: "Noto Sans", sans-serif;
  font-size: 22px;
}

button, input, select {
  font: inherit;
  color: inherit;
  background: none;
  border: none;
  outline: none;
}

button {
  display: flex;
  align-items: center;
  justify-content: center;
}

select, input[type="search"] {
  appearance: none;
}

svg {
  display: block;
  width: 32px;
  height: 32px;
  overflow: visible;
}

.sprite {
  position: absolute;
  width: 0;
  height: 0;
}

/* Icon paint */
.s, .sb, .sw, .sg, .sk, .sgr, .sl, .sb3, .sbk {
  fill: none;
  stroke: #d9d9d9;
  stroke-width: 2;
}
.sb { stroke: #7fbffa; }
.sw { stroke: #fff; }
.sg { stroke: #8b8b8b; }
.sk { stroke: #666; }
.sgr { stroke: #a2a5aa; }
.sl { stroke-width: 3; }
.sb3 { stroke: #90c8fa; stroke-width: 3; }
.sbk { stroke: #3a86d8; }
.f { fill: #d9d9d9; }
.fb { fill: #98caf6; }
.fbd { fill: #7fbffa; }
.fw { fill: #fff; }
.fy { fill: #f7d483; }
.fg { fill: #93d6a2; }
.edge { stroke: #3c4453; stroke-width: 2; }
.cy { color: #82d5e3; }

text {
  font-family: "Liberation Sans", sans-serif;
}
.t36 { font-size: 36px; }
.t28 { font-size: 28px; font-weight: bold; }
.t24 { font-size: 24px; }
.t20 { font-size: 20px; }
.t18 { font-size: 18px; }
.t16 { font-size: 16px; font-weight: bold; }
.t14 { font-size: 14px; font-weight: bold; }
.t11 { font-size: 11px; font-weight: bold; }

/* Main toolbar */
.toolbar {
  display: flex;
  justify-content: center;
  align-items: center;
  gap: 130px;
  height: 72px;
  padding: 2px 8px 0 0;
  background: #3c4453;
  border-bottom: 2px solid #212830;
}

.group {
  display: flex;
  gap: 34px;
}

.badged {
  position: relative;
}
.badged::before {
  content: "";
  position: absolute;
  right: -15px;
  top: -4px;
  width: 20px;
  height: 20px;
  border-radius: 50%;
  background: #e8763c;
  border: 2px solid #fff;
}
.tools .badged::before {
  right: 0;
  top: 0;
}

.workspace {
  flex: 1;
  display: flex;
  min-height: 0;
}

/* Tool palette */
.palette {
  width: 180px;
  display: flex;
  flex-direction: column;
  background: #3d4351;
}

.palette-tabs {
  display: flex;
  gap: 2px;
  height: 46px;
  background: #212830;
}
.palette-tabs button {
  width: 65px;
  height: 44px;
  background: #2f3440;
}
.palette-tabs .active {
  height: 46px;
  background: #3d4351;
}
.palette-tabs .more {
  flex: 1;
  background: #3d4351;
}
.palette-tabs svg { width: 30px; height: 28px; }
.palette-tabs .more svg { width: 14px; height: 12px; }

.palette-body {
  flex: 1;
  min-height: 0;
  overflow: hidden;
}

.palette section {
  padding-bottom: 10px;
}
.palette section + section::before {
  content: "";
  display: block;
  height: 2px;
  margin: 0 8px;
  background: #2a303a;
}

.palette h2 {
  display: flex;
  align-items: center;
  height: 40px;
  padding: 4px 10px 0 8px;
  font: 20px/24px "Liberation Sans", sans-serif;
  color: #f4f4f4;
}
.palette section:first-child h2 {
  height: 38px;
}
.palette h2::before {
  content: "";
  width: 18px;
  height: 10px;
  margin-right: 8px;
  background: #f4f4f4;
  clip-path: polygon(0 0, 100% 0, 50% 100%);
}
.palette h2 button { margin-left: auto; }
.palette h2 svg { width: 20px; height: 20px; }

.tools {
  display: grid;
  grid-template-columns: repeat(3, 1fr);
}
.tools button {
  width: 44px;
  height: 44px;
  margin: 10px 8px;
}
.tools .on { background: #333844; }
.tools .fly {
  position: relative;
}
.tools .fly::after {
  content: "";
  position: absolute;
  right: 0;
  bottom: 0;
  width: 8px;
  height: 8px;
  background: #a0a0a0;
  clip-path: polygon(100% 0, 100% 100%, 0 100%);
}

.palette-foot {
  display: flex;
  align-items: center;
  gap: 34px;
  height: 50px;
  padding: 4px 0 0 30px;
}
.palette-foot svg { width: 24px; height: 22px; }

/* Document */
.main {
  flex: 1;
  min-width: 0;
  display: flex;
  flex-direction: column;
}

.upper {
  flex: 1;
  min-height: 0;
  display: flex;
}

.document {
  flex: 1;
  min-width: 0;
  display: flex;
  flex-direction: column;
}

.rest { flex: 1; }

.doc-tabs {
  display: flex;
  gap: 2px;
  height: 46px;
  padding: 0 2px 2px;
  font: 22px/26px "Liberation Sans", sans-serif;
}
.doc-tabs > * { background: #3c4453; }
.doc-tabs .square { width: 46px; }
.doc-tabs .square + .square { width: 44px; }
.square + .square svg { width: 22px; height: 22px; }
.doc-tabs .doc {
  width: 256px;
  padding-left: 6px;
  justify-content: flex-start;
  color: #a5a7ad;
}
.doc-tabs .current {
  background: #4f5a6d;
  color: #fff;
  text-shadow: 0 0 1px #fff;
}

.canvas {
  flex: 1;
  min-height: 0;
  position: relative;
}
.scene {
  width: 100%;
  height: 100%;
  overflow: hidden;
}
.grid-minor { stroke: #262d39; }
.grid-major { stroke: #333b4a; }
.grid-solid { stroke: #454752; stroke-opacity: 0.45; }
.axis-x { stroke: #8b2c30; }
.axis-y { stroke: #3d5648; }
.axis-label {
  font-family: Inter, sans-serif;
  font-size: 33px;
  font-weight: 200;
  text-anchor: middle;
}

.view-label {
  position: absolute;
  top: 6px;
  left: 32px;
  display: flex;
  gap: 14px;
  color: #a3a39f;
  font-size: 24px;
}
.view-label button + button {
  padding-left: 12px;
  border-left: 2px solid #8a8a86;
  line-height: 28px;
}
.view-label button:first-child { margin-right: 6px; }

.cube {
  position: absolute;
  top: 82px;
  right: 12px;
  width: 300px;
  height: 190px;
}
.cube-face { font-size: 24px; font-weight: bold; fill: #4b545c; }
.cube-side { font-size: 13px; font-weight: bold; fill: #4b545c; }
.compass { font-size: 24px; font-weight: bold; fill: #b5b6b8; }

.ucs {
  position: absolute;
  top: 341px;
  right: 91px;
  gap: 14px;
  width: 143px;
  height: 23px;
  border-radius: 8px;
  background: #66747b;
  color: #212830;
  font: 21px/23px "Liberation Sans", sans-serif;
}
.ucs svg { width: 18px; height: 12px; }

/* Drop-down arrow */
.caret { position: relative; }
.caret::after {
  content: "";
  position: absolute;
  right: 7px;
  top: 50%;
  width: 12px;
  height: 8px;
  margin-top: -5px;
  background: #d9d9d9;
  clip-path: polygon(0 0, 100% 0, 50% 100%);
  pointer-events: none;
}

/* Command line */
.command {
  position: absolute;
  left: 518px;
  bottom: 2px;
  display: grid;
  grid-template-columns: 76px 916px;
  gap: 2px;
  color: #b5b8bb;
  font: 20px/30px "Noto Sans", sans-serif;
}
.history {
  grid-column: 2;
  display: flex;
  justify-content: space-between;
  align-items: flex-start;
  height: 94px;
  padding: 6px 8px 0 8px;
  background: #3c4453;
  white-space: nowrap;
}
.thumb {
  align-self: flex-end;
  width: 8px;
  height: 40px;
  margin-bottom: 2px;
  border-radius: 4px;
  background: #97999c;
}
.prompt, .entry {
  height: 46px;
  background: #3c4453;
}
.prompt svg { width: 46px; height: 24px; }
.entry input {
  width: 100%;
  height: 100%;
  padding: 0 0 2px 8px;
  font-size: 22px;
  font-style: italic;
}
.entry input::placeholder { color: #9fa2a6; }
.entry::after { background: #a3a6aa; }

/* Inspector */
.inspector {
  width: 668px;
  background: #3c4453;
}

.panel-tabs {
  display: flex;
  gap: 2px;
  height: 46px;
  background: #212830;
}
.panel-tabs > * {
  width: 103px;
  height: 44px;
  background: #2f3440;
}
.panel-tabs .active { height: 46px; background: #3c4453; }
.panel-tabs .rest { flex: 1; }
.panel-tabs .more { width: 48px; background: #3c4453; }
.panel-tabs .more svg { width: 14px; height: 12px; }

.panel-head {
  display: flex;
  align-items: center;
  padding: 0 20px;
}
.panel-head h2 {
  font: 500 22px/28px Inter, sans-serif;
  color: #f0f0f0;
}
.panel-head .dock svg { width: 24px; height: 28px; }

.layers .panel-head {
  height: 40px;
  gap: 16px;
}
.layers h2 { width: 90px; }
.layers .panel-head button svg { margin-top: 14px; }
.layers .panel-head .dock { margin-left: auto; }
.layers .panel-head .dock svg { margin-top: -6px; }

.field {
  display: flex;
  align-items: center;
  width: 100%;
  height: 36px;
  background: #4f5a6c;
  border: 2px solid #303d41;
  border-radius: 4px;
  color: #fff;
}
.field select, .field input {
  width: 100%;
  height: 100%;
  font-weight: 500;
  padding-left: 12px;
  opacity: 1;
}
.field input { padding-left: 6px; font-weight: 400; }
.disabled {
  background: #434b5b;
  border-color: #3a4450;
  color: #7f8691;
}
.disabled::after { background: #7f8691; }

.swatch {
  flex: none;
  width: 18px;
  height: 18px;
  background: #fff;
  border: 2px solid #000;
}
.rule {
  display: block;
  flex: none;
  width: 64px;
  height: 2px;
  background: #fff;
}

.layer-select, .state-select {
  width: auto;
  height: 50px;
  margin: 26px 19px 0 22px;
  border-radius: 6px;
}
.layer-select select, .state-select select { padding-bottom: 2px; }
.state-select { margin-top: 6px; }
.layer-state {
  flex: none;
  width: 130px;
  height: 24px;
  margin-left: 18px;
}
.layer-select .swatch { margin-left: -28px; }
.layer-select select { padding-left: 25px; }

.toggle {
  height: 56px;
  padding: 0 0 3px 28px;
  line-height: 28px;
  color: #c5c7ca;
}
.toggle::before {
  content: "";
  width: 18px;
  height: 14px;
  margin-right: 23px;
  background: #8f9194;
  clip-path: polygon(0 0, 100% 0, 50% 100%);
}

.layer-list {
  height: 348px;
  margin: 0 20px;
  background: #4f5a6c;
  border: 2px solid #2a303a;
}
.layer-list table {
  width: 100%;
  table-layout: fixed;
  border-collapse: collapse;
}
.c-eye { width: 52px; }
.c-name { width: 256px; }
.c-small { width: 44px; }
.c-line { width: 94px; }
.layer-list th {
  height: 45px;
  background: #2f3440;
  border-bottom: 2px solid #2a303a;
  border-right: 2px solid #363c49;
  color: #e8e8e8;
}
.layer-list th:last-child { border-right: none; }
.layer-list th svg, .layer-list td svg {
  width: 20px;
  height: 20px;
  margin: 0 auto;
}
.layer-list th:first-child svg, .layer-list td:first-child svg { width: 26px; }
.layer-list .name { text-align: left; }
.layer-list th.name {
  position: relative;
  background: #4f5a6d;
  color: #d9dde3;
  line-height: 28px;
}
/* sort marker under the active column */
.layer-list th.name::after {
  content: "";
  position: absolute;
  left: 120px;
  bottom: 0;
  width: 12px;
  height: 9px;
  background: #4f9bf5;
  clip-path: polygon(50% 0, 100% 100%, 0 100%);
}
.layer-list th.name svg, .layer-list .name span, .layer-list .name .swatch {
  display: inline-block;
  vertical-align: middle;
}
.layer-list th.name svg { width: 18px; height: 18px; margin-left: 7px; }
.layer-list th.name span { width: 182px; margin-left: 12px; }
.layer-list th.name .sort { width: 12px; margin: 5px 13px 0 0; float: right; }
.layer-list td {
  height: 38px;
  background: #919fae;
  color: #fff;
  line-height: 28px;
}
.layer-list td span { margin-left: 19px; }
.layer-list td .rule { margin-left: 14px; }
.layer-list .weight { padding-left: 12px; }

.list-actions {
  display: flex;
  align-items: center;
  gap: 28px;
  height: 51px;
  padding: 0 29px 0 33px;
}
.list-actions .remove { margin-left: auto; }
.list-actions .columns svg { width: 38px; height: 20px; }

.search {
  display: flex;
  align-items: center;
  gap: 8px;
  height: 40px;
  margin: 0 22px 18px;
  padding-left: 11px;
  background: #fff;
  border-radius: 8px;
}
.search svg {
  width: 34px;
  height: 26px;
  fill: none;
  stroke: #555;
  stroke-width: 2;
}
.search input {
  flex: 1;
  font: 24px/30px Inter, sans-serif;
  color: #333;
}
.search input::placeholder { color: #b9b9b9; }

.properties { border-top: 2px solid #212830; }
.properties .panel-head {
  height: 36px;
  align-items: flex-start;
}
.properties h2 { flex: 1; margin-top: 4px; }
.properties .panel-head > button svg { margin-top: -2px; }
.properties .panel-head > .dock { margin-left: 18px; }
.switch {
  display: flex;
  gap: 2px;
  margin-right: 17px;
  padding: 0 2px 2px;
  background: #2c323c;
  font-size: 18px;
}
.switch button {
  width: 55px;
  height: 24px;
  background: #3c4453;
  color: #868b94;
}
.switch .on {
  width: 60px;
  background: #4f5a6d;
  color: #fff;
  font-weight: 500;
}

.space {
  width: auto;
  height: 42px;
  margin: 14px 22px 16px;
}

.rows {
  display: grid;
  grid-template-columns: 308px 1fr;
  grid-auto-rows: 36px;
  gap: 10px 18px;
  padding-right: 27px;
}
.rows label {
  text-align: right;
  line-height: 34px;
  font-weight: 500;
  color: #c9cbcd;
}
.with-swatch .swatch { margin-left: 18px; }
.with-swatch select { padding-left: 20px; }
.with-rule .rule { margin-left: 14px; }
.with-rule select { padding-left: 28px; }
.pair {
  display: flex;
  align-items: center;
  gap: 8px;
}
.tight { gap: 4px; }
.pair .field:first-child { flex: 1; }
.pair .meter {
  height: 34px;
  margin-left: 6px;
  border-radius: 0;
  background:
    linear-gradient(#5a96e8, #5a96e8) 0 0 / 2px 7px no-repeat,
    linear-gradient(#5a96e8, #5a96e8) 0 100% / 2px 7px no-repeat,
    linear-gradient(#98a0ac, #98a0ac) 49% 100% / 1px 12px no-repeat #4f5a6c;
}
.meter input {
  text-align: right;
  padding-right: 4px;
}
.source {
  width: 77px;
  justify-content: flex-start;
  padding-left: 14px;
}
.source svg { width: 26px; height: 24px; }
.pick { width: 40px; background: #3c4453; }

/* Status bar */
.status {
  display: flex;
  gap: 2px;
  height: 48px;
  padding: 2px;
  line-height: 28px;
}
.status > * { background: #3c4453; }
.layout { padding: 0 17px; color: #c0c2c5; }
.status .current {
  width: 113px;
  padding: 0;
  background: #4f5a6d;
  color: #fff;
  font-weight: 600;
}
.add { width: 48px; }
.add svg { width: 22px; height: 22px; }

.tray {
  display: flex;
  align-items: center;
  gap: 4px;
  padding: 0 6px 0 14px;
}
.tray output {
  width: 236px;
  color: #b5b7ba;
  font-size: 24px;
  white-space: nowrap;
}
.tray button {
  width: 40px;
  height: 40px;
  color: #d9d9d9;
}
.tray .on { background: #6b91c2; }
.tray .scale {
  width: 62px;
  gap: 10px;
  color: #b5b7ba;
}
.scale i {
  width: 12px;
  height: 8px;
  background: #d9d9d9;
  clip-path: polygon(0 0, 100% 0, 50% 100%);
}
.tray .cog { width: 30px; height: 30px; }
```
